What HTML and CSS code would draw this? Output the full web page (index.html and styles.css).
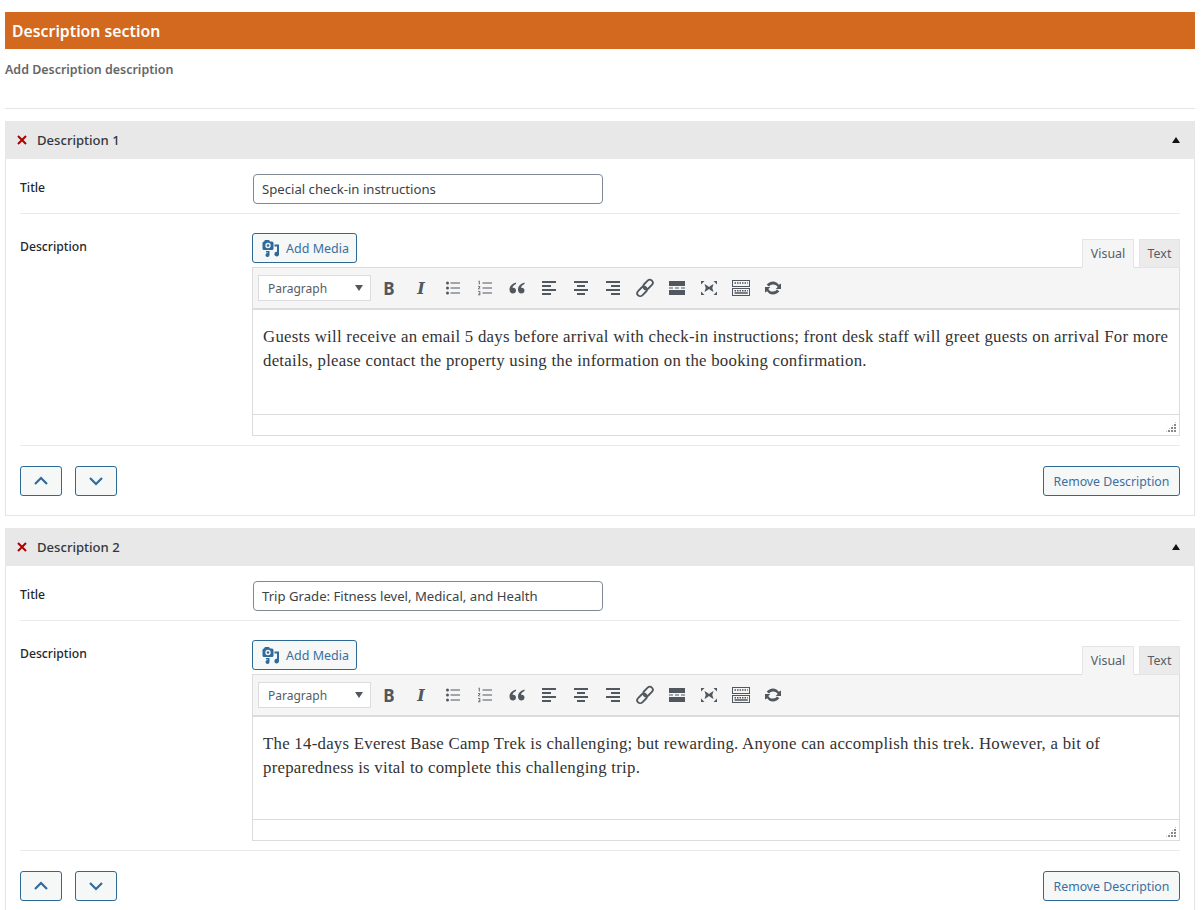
FILE: index.html
```html
<!DOCTYPE html>
<html lang="en">
<head>
<meta charset="utf-8">
<title>Description section</title>
<link rel="stylesheet" href="styles.css">
</head>
<body>
<svg class="sprite" width="0" height="0" aria-hidden="true">
  <symbol id="i-media" viewBox="0 0 20 20"><path fill-rule="evenodd" d="M5 2h4l1 1.500h2a1.500 1.500 0 0 1 1.500 1.500v5.500A1.500 1.500 0 0 1 12 12H4a1.500 1.500 0 0 1-1.500-1.500V5A1.500 1.500 0 0 1 4 3.500zM8 4.800a2.700 2.700 0 1 0 0 5.400 2.700 2.700 0 0 0 0-5.400z"/><circle cx="8" cy="7.500" r="1.300"/><path d="M14.500 6.500H19V16a2.300 2.300 0 1 1-2-2.200V8.500h-2.500zM6 13h3.500v4a2 2 0 1 1-1.700-2V14.500H6z"/></symbol>
  <symbol id="i-x" viewBox="0 0 10 10"><path d="M1 1l8 8M9 1l-8 8" fill="none" stroke="currentColor" stroke-width="2"/></symbol>
  <symbol id="i-ul" viewBox="0 0 20 20"><circle cx="4.500" cy="5" r="1.500"/><circle cx="4.500" cy="10" r="1.500"/><circle cx="4.500" cy="15" r="1.500"/><path d="M7.500 4.500h9.500v1H7.500zM7.500 9.500h9.500v1H7.500zM7.500 14.500h9.500v1H7.500z"/></symbol>
  <symbol id="i-ol" viewBox="0 0 20 20"><path d="M7.500 4.500h9.500v1H7.500zM7.500 9.500h9.500v1H7.500zM7.500 14.500h9.500v1H7.500z"/><path d="M3.500 2.800h1.200v3.800H3.800V3.500h-.3zM3 8.200h2.300v.8L4 10.700h1.400v.6H3v-.6L4.400 9H3zM3 13.300h2.300v3.900H3v-.6h1.500v-1h-1v-.6h1v-1H3z"/></symbol>
  <symbol id="i-quote" viewBox="0 0 20 20"><path d="M9 4.500C5.500 5.500 2.500 7.800 2.500 11.500 2.500 14 4 15.500 5.800 15.500S9 14.200 9 12.500 7.800 9.800 6.300 9.800c-.3 0-.6 0-.8.100C5.800 8 7.200 6.800 9 6zM17.500 4.500c-3.500 1-6.500 3.300-6.500 7 0 2.500 1.500 4 3.300 4s3.200-1.300 3.200-3-1.200-2.700-2.700-2.700c-.3 0-.6 0-.8.100.3-1.900 1.700-3.100 3.500-3.900z"/></symbol>
  <symbol id="i-left" viewBox="0 0 20 20"><path d="M3 3h14v2H3zM3 7h9v2H3zM3 11h14v2H3zM3 15h9v2H3z"/></symbol>
  <symbol id="i-center" viewBox="0 0 20 20"><path d="M3 3h14v2H3zM6 7h8v2H6zM3 11h14v2H3zM6 15h8v2H6z"/></symbol>
  <symbol id="i-right" viewBox="0 0 20 20"><path d="M3 3h14v2H3zM8 7h9v2H8zM3 11h14v2H3zM8 15h9v2H8z"/></symbol>
  <symbol id="i-link" viewBox="0 0 20 20"><g fill="none" stroke="currentColor" stroke-width="1.800"><rect x="7.500" y="3.600" width="11" height="6" rx="3" transform="rotate(-45 13 6.600)"/><rect x="1.500" y="10.400" width="11" height="6" rx="3" transform="rotate(-45 7 13.400)"/></g></symbol>
  <symbol id="i-more" viewBox="0 0 20 20"><path d="M2 3h16v5H2zM2 9.500h4v1H2zM8 9.500h4v1H8zM14 9.500h4v1h-4zM2 12h16v5H2z"/></symbol>
  <symbol id="i-full" viewBox="0 0 20 20"><path d="M2 3h3.500L2 6.500zM18 3h-3.500L18 6.500zM2 17h3.500L2 13.500zM18 17h-3.500L18 13.500z"/><path d="M5.500 6 8 7.500 10 9l2-1.500L14.500 6l-1 3.500L13 10l.5.5 1 3.500-2.500-1.500L10 11l-2 1.500L5.500 14l1-3.500L7 10l-.5-.5z"/></symbol>
  <symbol id="i-kitchen" viewBox="0 0 20 20"><path fill-rule="evenodd" d="M1 2h18v7H1zM2 3v5h16V3zM1 10h18v8H1zM2 11v6h16v-6z"/><path d="M3.500 4.200h1.500v1.500H3.500zM6 4.200h1.500v1.500H6zM8.500 4.200H10v1.500H8.500zM11 4.200h1.500v1.500H11zM13.500 4.200H15v1.500h-1.500zM16 4.200h.8v1.500H16zM3.500 12h1.500v1.500H3.500zM6 12h1.500v1.500H6zM8.500 12H10v1.500H8.500zM11 12h1.500v1.500H11zM13.500 12H15v1.500h-1.500zM16 12h.8v1.500H16zM3.500 14.300h13.300v1.500H3.500z"/></symbol>
  <symbol id="i-refresh" viewBox="0 0 20 20"><path d="M10 3.500c2.500 0 4.600 1.300 5.800 3.300L18 5.500V11h-5.300l2-1.900C13.900 7.500 12.100 6.400 10 6.500c-1.700 0-3.100.8-4 2L3.700 6.700C5.100 4.800 7.400 3.500 10 3.500zM2 9h5.300l-2 1.900c.8 1.600 2.600 2.700 4.700 2.600 1.700 0 3.100-.8 4-2l2.300 1.800c-1.400 1.900-3.700 3.200-6.300 3.200-2.500 0-4.600-1.300-5.800-3.300L2 14.500z"/></symbol>
</svg>

<header class="section-title">Description section</header>
<p class="section-note">Add Description description</p>
<hr class="section-rule">

<section class="card">
  <div class="card-head">
    <svg class="x-mark"><use href="#i-x"/></svg>
    <span class="card-name">Description 1</span>
    <span class="caret"></span>
  </div>
  <div class="card-body">
    <div class="row title-row">
      <label class="label">Title</label>
      <div class="field"><div class="text-input">Special check-in instructions</div></div>
    </div>
    <div class="row desc-row">
      <label class="label">Description</label>
      <div class="field">
        <div class="editor-top">
          <button class="btn media-btn"><svg class="media-icon"><use href="#i-media"/></svg>Add Media</button>
          <div class="tabs"><span class="tab tab-on">Visual</span><span class="tab">Text</span></div>
        </div>
        <div class="editor">
          <div class="toolbar">
            <div class="format"><span>Paragraph</span><i class="format-caret"></i></div>
            <b class="tool tool-b">B</b>
            <i class="tool tool-i">I</i>
            <svg class="tool-svg"><use href="#i-ul"/></svg>
            <svg class="tool-svg"><use href="#i-ol"/></svg>
            <svg class="tool-svg"><use href="#i-quote"/></svg>
            <svg class="tool-svg"><use href="#i-left"/></svg>
            <svg class="tool-svg"><use href="#i-center"/></svg>
            <svg class="tool-svg"><use href="#i-right"/></svg>
            <svg class="tool-svg"><use href="#i-link"/></svg>
            <svg class="tool-svg"><use href="#i-more"/></svg>
            <svg class="tool-svg"><use href="#i-full"/></svg>
            <svg class="tool-svg"><use href="#i-kitchen"/></svg>
            <svg class="tool-svg"><use href="#i-refresh"/></svg>
          </div>
          <div class="content content-a">Guests will receive an email 5 days before arrival with check-in instructions; front desk staff will greet guests on arrival For more details, please contact the property using the information on the booking confirmation.</div>
          <div class="status"><i class="grip"></i></div>
        </div>
      </div>
    </div>
    <div class="actions">
      <button class="btn arrow-btn"><svg class="chev" viewBox="0 0 16 10"><path d="M2 8l6-6 6 6"/></svg></button>
      <button class="btn arrow-btn"><svg class="chev" viewBox="0 0 16 10"><path d="M2 2l6 6 6-6"/></svg></button>
      <button class="btn remove-btn">Remove Description</button>
    </div>
  </div>
</section>

<section class="card">
  <div class="card-head">
    <svg class="x-mark"><use href="#i-x"/></svg>
    <span class="card-name">Description 2</span>
    <span class="caret"></span>
  </div>
  <div class="card-body">
    <div class="row title-row">
      <label class="label">Title</label>
      <div class="field"><div class="text-input">Trip Grade: Fitness level, Medical, and Health</div></div>
    </div>
    <div class="row desc-row">
      <label class="label">Description</label>
      <div class="field">
        <div class="editor-top">
          <button class="btn media-btn"><svg class="media-icon"><use href="#i-media"/></svg>Add Media</button>
          <div class="tabs"><span class="tab tab-on">Visual</span><span class="tab">Text</span></div>
        </div>
        <div class="editor">
          <div class="toolbar">
            <div class="format"><span>Paragraph</span><i class="format-caret"></i></div>
            <b class="tool tool-b">B</b>
            <i class="tool tool-i">I</i>
            <svg class="tool-svg"><use href="#i-ul"/></svg>
            <svg class="tool-svg"><use href="#i-ol"/></svg>
            <svg class="tool-svg"><use href="#i-quote"/></svg>
            <svg class="tool-svg"><use href="#i-left"/></svg>
            <svg class="tool-svg"><use href="#i-center"/></svg>
            <svg class="tool-svg"><use href="#i-right"/></svg>
            <svg class="tool-svg"><use href="#i-link"/></svg>
            <svg class="tool-svg"><use href="#i-more"/></svg>
            <svg class="tool-svg"><use href="#i-full"/></svg>
            <svg class="tool-svg"><use href="#i-kitchen"/></svg>
            <svg class="tool-svg"><use href="#i-refresh"/></svg>
          </div>
          <div class="content content-b">The 14-days Everest Base Camp Trek is challenging; but rewarding. Anyone can accomplish this trek. However, a bit of preparedness is vital to complete this challenging trip.</div>
          <div class="status"><i class="grip"></i></div>
        </div>
      </div>
    </div>
    <div class="actions">
      <button class="btn arrow-btn"><svg class="chev" viewBox="0 0 16 10"><path d="M2 8l6-6 6 6"/></svg></button>
      <button class="btn arrow-btn"><svg class="chev" viewBox="0 0 16 10"><path d="M2 2l6 6 6-6"/></svg></button>
      <button class="btn remove-btn">Remove Description</button>
    </div>
  </div>
</section>
</body>
</html>
```

FILE: styles.css
```css
* { box-sizing: border-box; }
html { height: 910px; overflow: hidden; background: #fff; }
body {
  margin: 0;
  padding: 12px 9px 0 5px;
  font-family: "Noto Sans", "Open Sans", sans-serif;
  font-size: 13px;
  color: #32373c;
  background: #fff;
}
.sprite { position: absolute; }
.section-title {
  height: 37px;
  line-height: 38px;
  padding-left: 7px;
  background: #d2691e;
  color: #fff;
  font-size: 15.800px;
  font-weight: 600;
}
.section-note {
  margin: 0;
  padding-top: 12px;
  height: 59px;
  line-height: 18px;
  color: #666;
  font-size: 12.450px;
  font-weight: 600;
}
.section-rule { margin: 0 0 12px; height: 1px; border: 0; background: #e5e5e5; }
.card { margin-bottom: 12px; border: 1px solid #e5e5e5; border-top: 0; }
.card-head {
  display: flex;
  align-items: center;
  height: 38px;
  margin: 0 -1px;
  padding: 0 15px 0 12px;
  background: #e8e8e8;
}
.x-mark { width: 10px; height: 10px; margin-right: 10px; color: #a00; }
.card-name { flex: 1; color: #32373c; font-size: 13.100px; font-weight: 500; }
.caret {
  width: 0; height: 0;
  border-left: 4px solid transparent;
  border-right: 4px solid transparent;
  border-bottom: 6px solid #111;
}
.card-body { padding: 0 14px; }
.row { display: flex; border-bottom: 1px solid #eaeaea; }
.label { width: 232px; flex: none; color: #23282d; font-size: 12.200px; font-weight: 500; line-height: 18px; }
.field { flex: 1; min-width: 0; }
.title-row { height: 55px; padding-top: 15px; padding-bottom: 9px; }
.title-row .label { padding-top: 5px; }
.text-input {
  width: 350px;
  height: 30px;
  margin-left: 1px;
  padding: 0 8px;
  line-height: 29px;
  border: 1px solid #7e8993;
  border-radius: 4px;
  color: #3c4248;
  font-size: 13.150px;
  white-space: nowrap;
}
.desc-row { padding-top: 19px; padding-bottom: 9px; }
.desc-row .label { padding-top: 5px; }
.editor-top { display: flex; justify-content: space-between; align-items: flex-end; height: 35px; margin-bottom: -1px; }
.btn {
  display: inline-flex;
  align-items: center;
  justify-content: center;
  height: 30px;
  padding: 0;
  border: 1px solid #2c6a95;
  border-radius: 3px;
  background: #f6f7f7;
  color: #3a6f9e;
  font: 12.300px "Noto Sans", "Open Sans", sans-serif;
}
.media-btn { width: 105px; margin-bottom: 5px; align-self: flex-start; font-size: 12.500px; }
.media-icon { width: 20px; height: 20px; margin-right: 6px; fill: #2f6a9c; }
.tabs { display: flex; position: relative; gap: 5px; }
.tab {
  width: 41px;
  height: 29px;
  line-height: 28px;
  text-align: center;
  border: 1px solid #e2e4e7;
  background: #ebebeb;
  color: #555d66;
  font-size: 12.400px;
}
.tab-on { width: 52px; background: #f5f5f5; border-bottom-color: #f5f5f5; }
.editor { border: 1px solid #dcdcde; }
.toolbar {
  display: flex;
  align-items: center;
  height: 42px;
  padding-left: 5px;
  background: #f5f5f5;
  border-bottom: 2px solid #dcdcdc;
}
.format {
  display: flex;
  align-items: center;
  justify-content: space-between;
  width: 113px;
  height: 26px;
  margin-right: 2px;
  padding: 0 7px 0 9px;
  background: #fff;
  border: 1px solid #dcdcde;
  color: #555d66;
  font-size: 12px;
}
.format-caret {
  width: 0; height: 0;
  border-left: 4px solid transparent;
  border-right: 4px solid transparent;
  border-top: 6px solid #50575e;
}
.tool { width: 32px; text-align: center; color: #50575e; line-height: 1; }
.tool-b { font: 700 17px "Noto Sans", sans-serif; }
.tool-i { font: italic 700 16px "DejaVu Serif", serif; }
.tool-svg { width: 20px; height: 20px; margin: 0 6px; fill: #50575e; color: #50575e; }
.content {
  padding: 15px 10px 0;
  color: #333;
  font-family: "Liberation Serif", serif;
  font-size: 16.800px;
  letter-spacing: .26px;
  line-height: 24px;
}
.content-a { height: 104px; }
.content-b { height: 102px; }
.status { position: relative; height: 21px; border-top: 1px solid #dcdcde; }
.grip {
  position: absolute;
  right: 2px;
  bottom: 2px;
  width: 12px;
  height: 12px;
  background: radial-gradient(circle at 1px 1px, #8a8a8a 0 1px, transparent 1px) 0 0 / 3px 3px;
  clip-path: polygon(100% 0, 100% 100%, 0 100%);
}
.actions { display: flex; align-items: flex-start; gap: 13px; height: 69px; padding-top: 20px; }
.arrow-btn { width: 42px; }
.chev { width: 16px; height: 10px; fill: none; stroke: #2f6a9c; stroke-width: 2.200; }
.remove-btn { width: 137px; margin-left: auto; }
```
